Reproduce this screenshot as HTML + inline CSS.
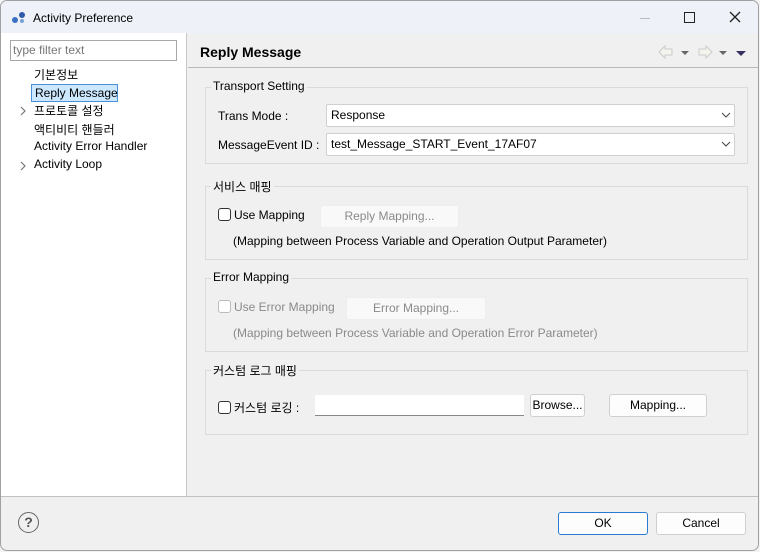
<!DOCTYPE html>
<html><head><style>
*{box-sizing:border-box;margin:0;padding:0}
body{width:760px;height:552px;background:#f3f3f3;font-family:"Liberation Sans","Noto Sans CJK KR",sans-serif;font-size:12px;color:#000;position:relative;overflow:hidden}
.a{position:absolute;white-space:nowrap}
.win{position:absolute;left:0;top:0;width:759px;height:551px;border:1px solid #a0a0a0;border-radius:7px;background:#f0f0f0;overflow:hidden}
.grp{position:absolute;border:1px solid #dadada}
.gl{position:absolute;top:-9px;left:5px;background:#f0f0f0;padding:0 2px}
.combo{position:absolute;background:#fff;border:1px solid #d0d0d0;border-radius:2px;height:23px;padding:3px 4px}
.btn{position:absolute;background:#fdfdfd;border:1px solid #d0d0d0;border-radius:3px;text-align:center;height:23px;line-height:21px}
.cb{display:inline-block;width:13px;height:13px;border:1px solid #333;border-radius:3px;vertical-align:-2px;margin-right:3px;background:#fff}
.dis{color:#8a8a8a}
</style></head><body>
<div class="win">
<div class="a" style="left:0;top:0;width:759px;height:33px;background:#eef2f8"></div>
<svg class="a" style="left:10px;top:9px" width="16" height="14"><circle cx="4" cy="10" r="3" fill="#3a6fc4"/><circle cx="11" cy="5" r="3" fill="#2c5aa8"/><circle cx="11" cy="11" r="2" fill="#7aa0d8"/></svg>
<div class="a" style="left:32px;top:10px">Activity Preference</div>
<div class="a" style="left:639px;top:17px;width:10px;height:1px;background:#bbb"></div>
<div class="a" style="left:683px;top:11px;width:11px;height:11px;border:1.5px solid #222"></div>
<svg class="a" style="left:728px;top:10px" width="12" height="12"><path d="M1 1L11 11M11 1L1 11" stroke="#222" stroke-width="1.3"/></svg>
<div class="a" style="left:0;top:32px;width:186px;height:463px;background:#fff;border-right:1px solid #c8c8c8"></div>
<div class="a" style="left:9px;top:39px;width:167px;height:21px;border:1px solid #a8a8a8;background:#fff;color:#777;padding:2px 2px">type filter text</div>
<div class="a" style="left:33px;top:65px">기본정보</div>
<div class="a" style="left:30px;top:83px;width:87px;height:18px;background:#cce8ff;border:1px solid #4a90d9;padding:1px 3px">Reply Message</div>
<svg class="a" style="left:18px;top:105px" width="8" height="10"><path d="M2 1l4 4-4 4" fill="none" stroke="#777" stroke-width="1.2"/></svg>
<div class="a" style="left:33px;top:101px">프로토콜 설정</div>
<div class="a" style="left:33px;top:120px">액티비티 핸들러</div>
<div class="a" style="left:33px;top:138px">Activity Error Handler</div>
<svg class="a" style="left:18px;top:160px" width="8" height="10"><path d="M2 1l4 4-4 4" fill="none" stroke="#777" stroke-width="1.2"/></svg>
<div class="a" style="left:33px;top:156px">Activity Loop</div>
<div class="a" style="left:199px;top:43px;font-weight:bold;font-size:14px">Reply Message</div>
<div class="a" style="left:187px;top:66px;width:572px;height:1px;background:#b8b8b8"></div>
<svg class="a" style="left:655px;top:42px" width="95" height="18"><path d="M3 9L9 3V6H16V12H9V15Z" fill="#f4f4ec" stroke="#ccc"/><path d="M25 8h8l-4 4z" fill="#666"/><path d="M56 9L50 3V6H43V12H50V15Z" fill="#f4f4ec" stroke="#ccc"/><path d="M63 8h8l-4 4z" fill="#666"/><path d="M80 8h10l-5 5z" fill="#3a3060"/></svg>
<div class="grp" style="left:204px;top:86px;width:543px;height:77px"><span class="gl">Transport Setting</span></div>
<div class="a" style="left:217px;top:108px">Trans Mode :</div>
<div class="combo" style="left:325px;top:103px;width:409px">Response</div>
<div class="a" style="left:217px;top:137px">MessageEvent ID :</div>
<div class="combo" style="left:325px;top:132px;width:409px">test_Message_START_Event_17AF07</div>
<svg class="a" style="left:720px;top:111px" width="10" height="6"><path d="M1 1l4 4 4-4" fill="none" stroke="#444"/></svg>
<svg class="a" style="left:720px;top:140px" width="10" height="6"><path d="M1 1l4 4 4-4" fill="none" stroke="#444"/></svg>
<div class="grp" style="left:204px;top:185px;width:543px;height:74px"><span class="gl">서비스 매핑</span></div>
<div class="a" style="left:217px;top:207px"><span class="cb"></span>Use Mapping</div>
<div class="btn dis" style="left:319px;top:204px;width:139px;background:#f9f9f9;border-color:#eee">Reply Mapping...</div>
<div class="a" style="left:232px;top:233px">(Mapping between Process Variable and Operation Output Parameter)</div>
<div class="grp" style="left:204px;top:277px;width:543px;height:74px"><span class="gl">Error Mapping</span></div>
<div class="a dis" style="left:217px;top:299px"><span class="cb" style="border-color:#bbb"></span>Use Error Mapping</div>
<div class="btn dis" style="left:345px;top:296px;width:140px;background:#f9f9f9;border-color:#eee">Error Mapping...</div>
<div class="a dis" style="left:232px;top:325px">(Mapping between Process Variable and Operation Error Parameter)</div>
<div class="grp" style="left:204px;top:369px;width:543px;height:65px"><span class="gl">커스텀 로그 매핑</span></div>
<div class="a" style="left:217px;top:398px"><span class="cb"></span>커스텀 로깅 :</div>
<div class="a" style="left:314px;top:394px;width:209px;height:21px;background:#fff;border-bottom:1px solid #888"></div>
<div class="btn" style="left:529px;top:393px;width:55px">Browse...</div>
<div class="btn" style="left:608px;top:393px;width:98px">Mapping...</div>
<div class="a" style="left:0;top:495px;width:759px;height:1px;background:#c0c0c0"></div>
<div class="a" style="left:17px;top:511px;width:21px;height:21px;border:1.5px solid #666;border-radius:50%;text-align:center;line-height:18px;font-weight:bold;color:#555;font-size:14px">?</div>
<div class="btn" style="left:557px;top:511px;width:90px;border:1px solid #2a7ad0;height:23px">OK</div>
<div class="btn" style="left:655px;top:511px;width:90px">Cancel</div>
</div>
</body></html>
